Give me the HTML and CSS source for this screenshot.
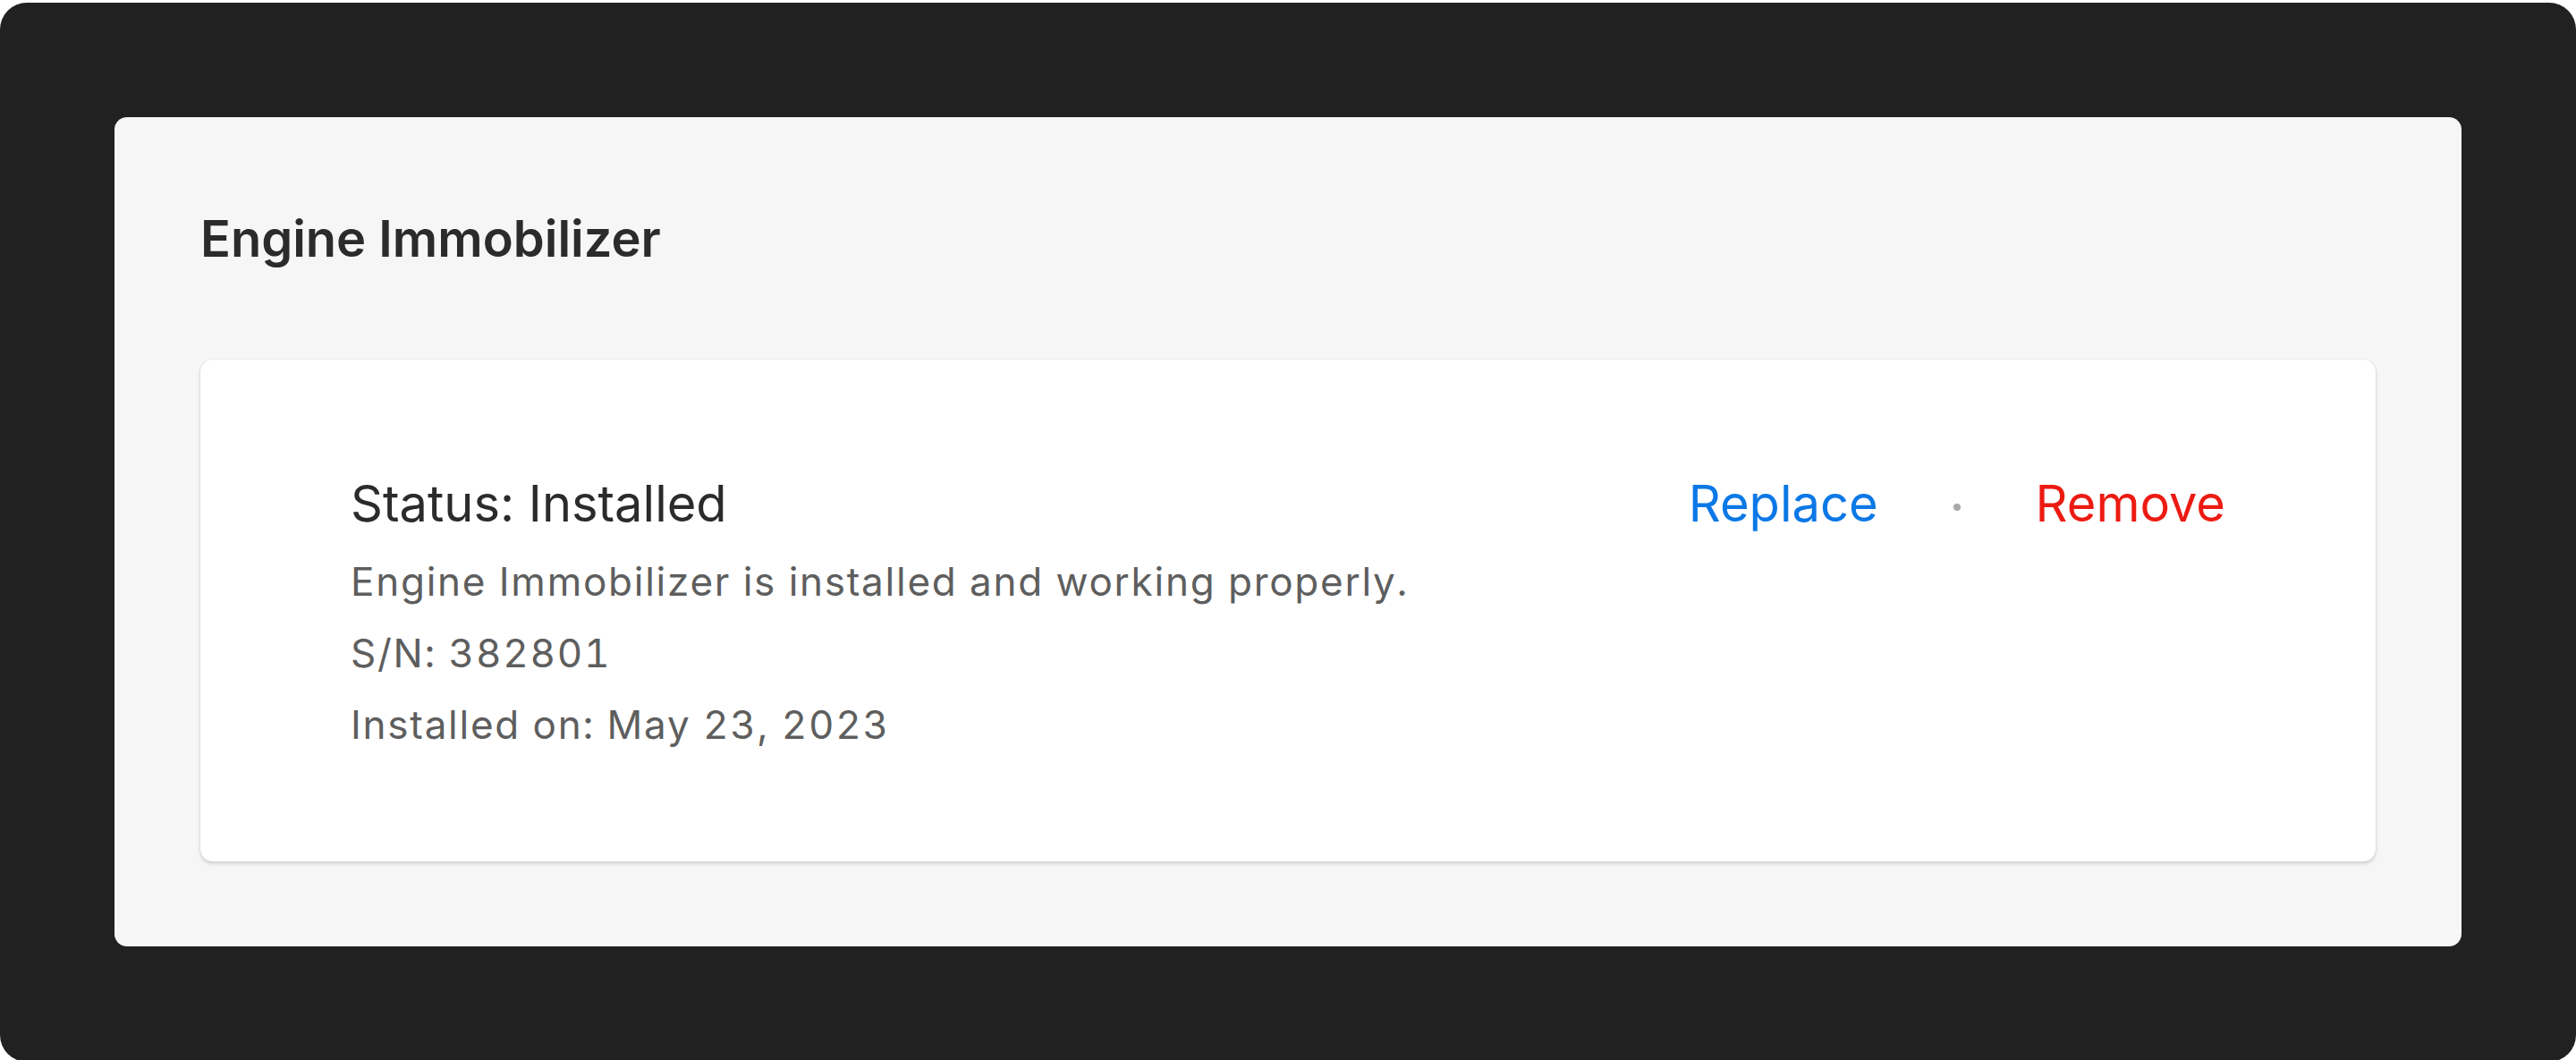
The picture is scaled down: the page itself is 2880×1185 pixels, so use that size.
FILE: index.html
```html
<!DOCTYPE html>
<html lang="en">
<head>
<meta charset="utf-8">
<title>Engine Immobilizer</title>
<link rel="stylesheet" href="styles.css">
</head>
<body>
  <div class="frame">
    <section class="panel">
      <h1 class="panel-title">Engine Immobilizer</h1>
      <div class="card">
        <div class="info">
          <div class="status">Status: Installed</div>
          <div class="detail">Engine Immobilizer is installed and working properly.</div>
          <div class="detail">S/N: 382801</div>
          <div class="detail">Installed on: May 23, 2023</div>
        </div>
        <div class="actions">
          <a class="action action-replace">Replace</a>
          <span class="sep"></span>
          <a class="action action-remove">Remove</a>
        </div>
      </div>
    </section>
  </div>
</body>
</html>
```

FILE: styles.css
```css
html, body {
  margin: 0;
  padding: 0;
  background: #ffffff;
  overflow: hidden;
}

body {
  font-family: Inter, "Noto Sans", "Liberation Sans", sans-serif;
  padding-top: 3px;
}

.frame {
  background: #212121;
  border-radius: 30px;
  padding: 128px 128px 128px 128px;
  height: 1184px;
  box-sizing: border-box;
}

.panel {
  background: #f6f6f6;
  border-radius: 14px;
  padding: 96px 96px 95px 96px;
}

.panel-title {
  margin: 6px 0 0 0;
  font-size: 56px;
  line-height: 68px;
  font-weight: 600;
  color: #2b2b2b;
  letter-spacing: 0;
}

.card {
  margin-top: 101px;
  background: #ffffff;
  border-radius: 14px;
  box-shadow: 0 0 2px rgba(0, 0, 0, 0.14), 0 3px 4px rgba(0, 0, 0, 0.13);
  padding: 127px 168px 113px 168px;
  display: flex;
  justify-content: space-between;
  align-items: flex-start;
}

.info {
  display: flex;
  flex-direction: column;
}

.status {
  font-size: 56px;
  line-height: 68px;
  color: #2b2b2b;
  margin-bottom: 13px;
}

.detail {
  font-size: 44px;
  line-height: 80px;
  color: #5e5e5e;
  letter-spacing: 1.75px;
  font-variant-numeric: tabular-nums;
}

.actions {
  display: flex;
  align-items: center;
  gap: 84px;
}

.action {
  font-size: 56px;
  line-height: 68px;
  cursor: pointer;
}

.action-replace {
  color: #0b78e6;
}

.action-remove {
  color: #ec1b12;
}

.sep {
  width: 8px;
  height: 8px;
  border-radius: 50%;
  background: #a9a9a9;
  margin-top: 8px;
}
```
